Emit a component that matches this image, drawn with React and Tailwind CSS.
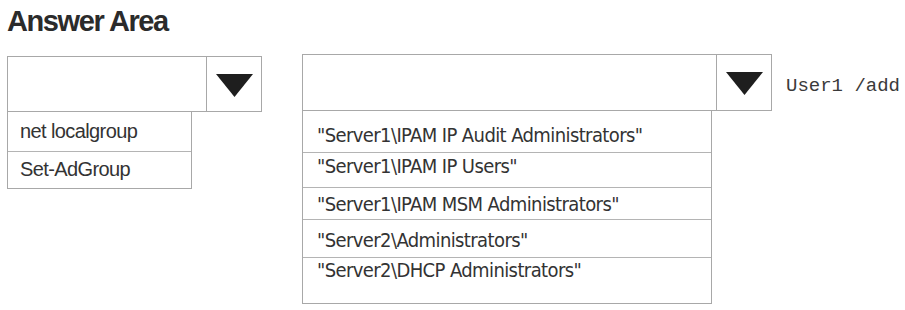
export default function App() {
  const leftOptions = [
    { label: "net localgroup", h: "h-[40px]", pt: "pt-[7px]" },
    { label: "Set-AdGroup", h: "h-[36px]", pt: "pt-[5px]" },
  ];

  const rightOptions = [
    { label: '"Server1\\IPAM IP Audit Administrators"', h: "h-[42px]", pt: "pt-[12px]" },
    { label: '"Server1\\IPAM IP Users"', h: "h-[35px]", pt: "pt-[1px]" },
    { label: '"Server1\\IPAM MSM Administrators"', h: "h-[32px]", pt: "pt-[4px]" },
    { label: '"Server2\\Administrators"', h: "h-[38px]", pt: "pt-[8px]" },
    { label: '"Server2\\DHCP Administrators"', h: "h-[45px]", pt: "pt-[0px]" },
  ];

  return (
    <div className="w-[905px] h-[310px] bg-white text-[#333] overflow-hidden font-['Liberation_Sans',Arial,sans-serif]">
      {/* Titre */}
      <h1 className="pl-[7px] pt-[3px] h-[54px] text-[29px] font-bold leading-[36px] tracking-[-1.4px] text-[#2b2b2b]">
        Answer Area
      </h1>

      <div className="flex items-start pl-[7px]">
        {/* Première liste */}
        <div className="flex flex-col mt-[2px]">
          <Combo width="w-[255px]" height="h-[56px]" />
          <div className="w-[185px] border border-t-0 border-[#a8a8a8]">
            {leftOptions.map((o, i) => (
              <div
                key={o.label}
                className={`${o.h} ${o.pt} pl-[12px] text-[20px] leading-[24px] tracking-[-0.6px] ${
                  i < leftOptions.length - 1 ? "border-b border-[#b4b4b4]" : ""
                }`}
              >
                {o.label}
              </div>
            ))}
          </div>
        </div>

        {/* Deuxième liste */}
        <div className="flex flex-col ml-[40px]">
          <Combo width="w-[470px]" height="h-[57px]" />
          <div className="w-[410px] border border-t-0 border-[#a8a8a8] font-['DejaVu_Sans_Condensed','DejaVu_Sans',sans-serif]">
            {rightOptions.map((o, i) => (
              <div
                key={o.label}
                className={`${o.h} ${o.pt} pl-[14px] text-[20px] leading-[24px] tracking-[-0.6px] ${
                  i < rightOptions.length - 1 ? "border-b border-[#b4b4b4]" : ""
                }`}
              >
                {o.label}
              </div>
            ))}
          </div>
        </div>

        <span className="ml-[14px] mt-[19px] text-[19px] leading-[26px] text-[#3a3a3a] font-['Liberation_Mono','Courier_New',monospace] whitespace-nowrap">
          User1 /add
        </span>
      </div>
    </div>
  );
}

function Combo({ width, height }) {
  return (
    <div className={`${width} ${height} flex border border-[#a8a8a8] bg-white`}>
      <div className="flex-1" />
      <div className="w-[55px] border-l border-[#a8a8a8] flex items-center justify-center pt-[2px]">
        <svg width="37" height="23" viewBox="0 0 37 23">
          <polygon points="0,0 37,0 18.5,23" fill="#1e1e1e" />
        </svg>
      </div>
    </div>
  );
}
